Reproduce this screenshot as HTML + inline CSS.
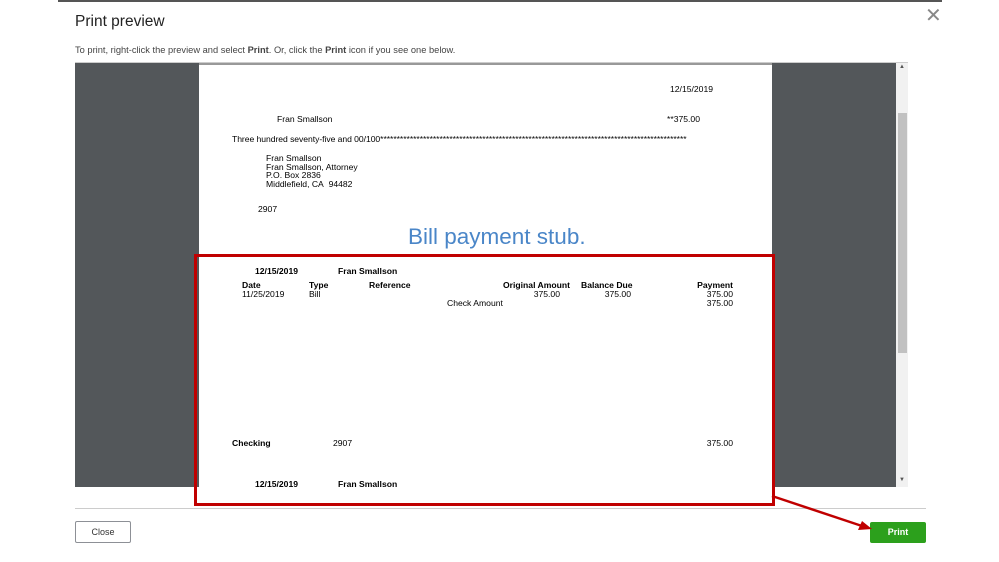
<!DOCTYPE html>
<html><head><style>
body{margin:0;width:999px;height:562px;background:#fff;position:relative;overflow:hidden;font-family:"Liberation Sans",sans-serif}
.a{position:absolute;white-space:nowrap}
.p{font-size:8.6px;color:#000}
.b{font-weight:bold}
.r{text-align:right}
</style></head><body>
<div class="a" style="left:58px;top:0;width:884px;height:2px;background:#555"></div>
<div class="a" style="left:75px;top:13px;font-size:15.5px;color:#222">Print preview</div>
<div class="a" style="left:925px;top:3px;font-size:20px;color:#888">✕</div>
<div class="a" style="left:75px;top:45px;font-size:9.3px;color:#444">To print, right-click the preview and select <b>Print</b>. Or, click the <b>Print</b> icon if you see one below.</div>
<div class="a" style="left:75px;top:62px;width:833px;height:1px;background:#ccc"></div>
<div class="a" style="left:75px;top:63px;width:821px;height:424px;background:#53575a"></div>
<div class="a" style="left:896px;top:63px;width:12px;height:424px;background:#f1f1f1"></div>
<div class="a" style="left:898px;top:113px;width:9px;height:240px;background:#c1c1c1"></div>
<div class="a" style="left:899px;top:64px;font-size:6px;color:#555">▲</div>
<div class="a" style="left:899px;top:477px;font-size:6px;color:#555">▼</div>
<div class="a" style="left:199px;top:63px;width:573px;height:424px;background:#fff;border-top:2px solid #999;box-sizing:border-box"></div>
<div class="a p" style="left:670px;top:84px">12/15/2019</div>
<div class="a p" style="left:277px;top:114px">Fran Smallson</div>
<div class="a p" style="left:667px;top:114px">**375.00</div>
<div class="a p" style="left:232px;top:134px;letter-spacing:-0.05px">Three hundred seventy-five and 00/100*********************************************************************************************</div>
<div class="a p" style="left:266px;top:154px;line-height:8.5px">Fran Smallson<br>Fran Smallson, Attorney<br>P.O. Box 2836<br>Middlefield, CA&nbsp; 94482</div>
<div class="a p" style="left:258px;top:204px">2907</div>
<div class="a" style="left:408px;top:224px;font-size:22.5px;color:#4a86c8">Bill payment stub.</div>
<div class="a p b" style="left:255px;top:266px">12/15/2019</div>
<div class="a p b" style="left:338px;top:266px">Fran Smallson</div>
<div class="a p b" style="left:242px;top:280px">Date</div>
<div class="a p b" style="left:309px;top:280px">Type</div>
<div class="a p b" style="left:369px;top:280px">Reference</div>
<div class="a p b r" style="left:470px;width:100px;top:280px">Original Amount</div>
<div class="a p b" style="left:581px;top:280px">Balance Due</div>
<div class="a p b r" style="left:633px;width:100px;top:280px">Payment</div>
<div class="a p" style="left:242px;top:289px">11/25/2019</div>
<div class="a p" style="left:309px;top:289px">Bill</div>
<div class="a p r" style="left:460px;width:100px;top:289px">375.00</div>
<div class="a p r" style="left:531px;width:100px;top:289px">375.00</div>
<div class="a p r" style="left:633px;width:100px;top:289px">375.00</div>
<div class="a p" style="left:447px;top:298px">Check Amount</div>
<div class="a p r" style="left:633px;width:100px;top:298px">375.00</div>
<div class="a p b" style="left:232px;top:438px">Checking</div>
<div class="a p" style="left:333px;top:438px">2907</div>
<div class="a p r" style="left:633px;width:100px;top:438px">375.00</div>
<div class="a p b" style="left:255px;top:479px">12/15/2019</div>
<div class="a p b" style="left:338px;top:479px">Fran Smallson</div>
<div class="a" style="left:194px;top:254px;width:575px;height:246px;border:3px solid #c00000"></div>
<div class="a" style="left:75px;top:508px;width:851px;height:1px;background:#ccc"></div>
<div class="a" style="left:75px;top:521px;width:54px;height:20px;border:1px solid #8d9096;border-radius:2px;font-size:9px;color:#333;text-align:center;line-height:20px">Close</div>
<div class="a" style="left:870px;top:522px;width:56px;height:21px;background:#2ca01c;border-radius:2px;font-size:9px;color:#fff;font-weight:bold;text-align:center;line-height:21px">Print</div>
<svg class="a" style="left:0;top:0" width="999" height="562"><line x1="772" y1="496" x2="862" y2="526" stroke="#c00000" stroke-width="2.5"/><polygon points="872,529 858,530 862,521" fill="#c00000"/></svg>
</body></html>
